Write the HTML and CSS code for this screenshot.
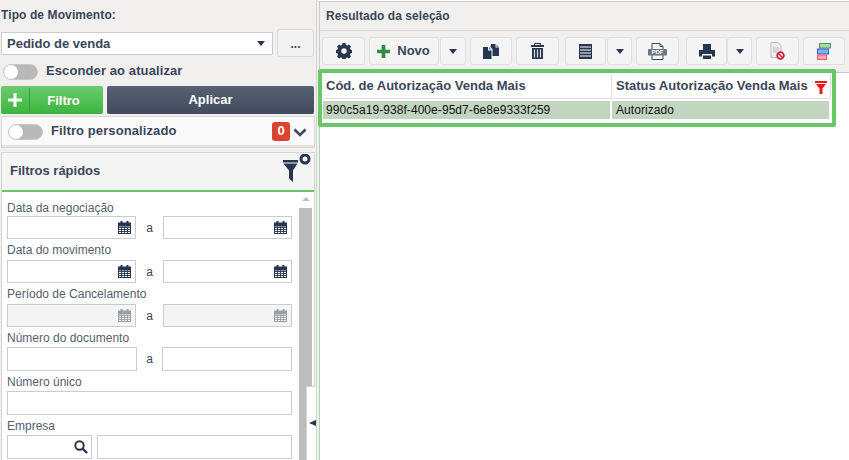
FILE: index.html
```html
<!DOCTYPE html>
<html lang="pt">
<head>
<meta charset="utf-8">
<title>Resultado da seleção</title>
<link rel="stylesheet" href="styles.css">
</head>
<body>
<div class="app">
  <aside class="left">
    <div class="tipo-title">Tipo de Movimento:</div>
    <div class="tipo-row">
      <div class="select"><span>Pedido de venda</span><i class="caret"></i></div>
      <div class="more">...</div>
    </div>
    <div class="toggle-row">
      <span class="toggle"><b></b></span><span class="toggle-label">Esconder ao atualizar</span>
    </div>
    <div class="action-row">
      <div class="btn-filter">
        <span class="plus"><svg width="14" height="14" viewBox="0 0 14 14"><path d="M5.500 0h3v5.500h5.500v3h-5.500v5.500h-3v-5.500h-5.500v-3h5.500z" fill="#fff"/></svg></span>
        <span class="filter-text">Filtro</span>
      </div>
      <div class="btn-apply">Aplicar</div>
    </div>
    <div class="custom">
      <span class="toggle"><b></b></span>
      <span class="custom-label">Filtro personalizado</span>
      <span class="badge">0</span>
      <svg class="chev" width="14" height="9" viewBox="0 0 14 9"><path d="M1.500 1.500L7 7l5.500-5.500" fill="none" stroke="#3c4a5c" stroke-width="2.600"/></svg>
    </div>
    <section class="quick">
      <header class="quick-head">
        <span class="quick-title">Filtros rápidos</span>
        <svg class="funnel" width="28" height="28" viewBox="0 0 28 28">
          <path d="M0 6h15v2.500h-15z" fill="#26364e"/>
          <path d="M0.500 9.500h14l-4.500 7v11.500l-4-3.500v-8z" fill="#26364e"/>
          <circle cx="22" cy="5" r="4" fill="none" stroke="#26364e" stroke-width="3"/>
        </svg>
      </header>
      <div class="quick-body">
        <div class="fields">
          <label class="lbl lbl-first">Data da negociação</label>
          <div class="range">
            <div class="inp date"><svg class="cal"><use href="#cal"/></svg></div><span class="a">a</span><div class="inp date"><svg class="cal"><use href="#cal"/></svg></div>
          </div>
          <label class="lbl">Data do movimento</label>
          <div class="range">
            <div class="inp date"><svg class="cal"><use href="#cal"/></svg></div><span class="a">a</span><div class="inp date"><svg class="cal"><use href="#cal"/></svg></div>
          </div>
          <label class="lbl">Período de Cancelamento</label>
          <div class="range">
            <div class="inp date off"><svg class="cal dim"><use href="#cal"/></svg></div><span class="a">a</span><div class="inp date off"><svg class="cal dim"><use href="#cal"/></svg></div>
          </div>
          <label class="lbl lbl-short">Número do documento</label>
          <div class="range tall">
            <div class="inp num"></div><span class="a a-num">a</span><div class="inp num"></div>
          </div>
          <label class="lbl lbl-short">Número único</label>
          <div class="inp wide"></div>
          <label class="lbl lbl-short">Empresa</label>
          <div class="emp">
            <div class="inp emp-code">
              <svg width="14" height="14" viewBox="0 0 14 14"><circle cx="5.500" cy="5.500" r="4.200" fill="none" stroke="#26364e" stroke-width="2"/><path d="M8.500 8.500l4.500 4.500" stroke="#26364e" stroke-width="2.400"/></svg>
            </div>
            <div class="inp emp-name"></div>
          </div>
        </div>
        <div class="scrollbar"><i class="up"></i><div class="thumb"></div></div>
      </div>
    </section>
    <div class="collapse"><i></i></div>
  </aside>
  <div class="gutter"></div>
  <main class="right">
    <div class="res-title">Resultado da seleção</div>
    <div class="toolbar">
      <div class="tb w43">
        <svg width="16" height="16" viewBox="0 0 16 16"><path fill="#26364e" fill-rule="evenodd" d="M6.500 0h3l.4 2 1.300.6 1.800-1.100 2 2-1.100 1.800.6 1.300 2 .4v3l-2 .4-.6 1.300 1.100 1.800-2 2-1.800-1.100-1.300.6-.4 2h-3l-.4-2-1.300-.6-1.800 1.100-2-2 1.100-1.800-.6-1.300-2-.4v-3l2-.4.6-1.300-1.100-1.800 2-2 1.800 1.100 1.300-.6zM8 5.300a2.700 2.700 0 1 0 0 5.400a2.700 2.700 0 0 0 0-5.400z"/></svg>
      </div>
      <div class="tb novo">
        <svg width="13" height="13" viewBox="0 0 14 14"><path d="M5 0h4v5h5v4h-5v5h-4v-5h-5v-4h5z" fill="#2f8f3f"/></svg>
        <span class="novo-text">Novo</span>
      </div>
      <div class="tb drop d1"><i class="caret"></i></div>
      <div class="tb w42 g4">
        <svg width="16" height="15" viewBox="0 0 16 15"><path d="M8 0h4.500v3.500h3.500v8.500h-6.500v-7l-2-2z" fill="#26364e"/><path d="M13.500 .5l2.500 2.500h-2.500z" fill="#3a8ad0"/><path d="M0 3h5v3.500h3.500v8.500h-8.500z" fill="#26364e"/><path d="M6 3l2.500 2.500h-2.500z" fill="#3a8ad0"/></svg>
      </div>
      <div class="tb w43 g4">
        <svg width="13" height="16" viewBox="0 0 13 16"><path d="M3.500 2v-1.500h6v1.500" fill="none" stroke="#26364e"/><path d="M0 2h13v2h-13zM1 5h11v11h-11z" fill="#26364e"/><path d="M3.500 6.500v8M6.500 6.500v8M9.500 6.500v8" stroke="#d8dce2" stroke-width="1.200"/></svg>
      </div>
      <div class="tb w41 g6">
        <svg width="13" height="15" viewBox="0 0 13 15"><path d="M0 0h13v15h-13z" fill="#26364e"/><path d="M1 3h11M1 6h11M1 9h11M1 12h11" stroke="#fff"/></svg>
      </div>
      <div class="tb drop"><i class="caret"></i></div>
      <div class="tb w43 g4">
        <svg width="19" height="17" viewBox="0 0 19 17"><path d="M4 .5h8l3 3v13h-11z" fill="#f4f4f4" stroke="#3b4659"/><path d="M12 .5v3h3" fill="none" stroke="#3b4659"/><rect x="0" y="6" width="19" height="6.500" rx="1" fill="#6c7480"/><text x="9.500" y="11.300" text-anchor="middle" class="pdf">PDF</text></svg>
      </div>
      <div class="tb w41 g7">
        <svg width="16" height="15" viewBox="0 0 16 15"><path d="M4 0h8v6h-8zM0 6h16v6.500h-3v-2.500h-10v2.500h-3zM4 11.500h8v3.500h-8z" fill="#26364e"/></svg>
      </div>
      <div class="tb drop d0"><i class="caret"></i></div>
      <div class="tb w43 g4">
        <svg width="15" height="18" viewBox="0 0 15 18"><path d="M1 .5h7l3 3v12h-10z" fill="#eee" stroke="#bbb"/><path d="M3 6h6M3 8h6M3 10h4" stroke="#bbb"/><circle cx="10.500" cy="13.500" r="3.300" fill="#fff" stroke="#d0203a" stroke-width="1.800"/><path d="M8.300 11.300l4.400 4.400" stroke="#d0203a" stroke-width="1.500"/></svg>
      </div>
      <div class="tb w42 g4">
        <svg width="14" height="17" viewBox="0 0 14 17"><rect x="2.500" y=".5" width="11" height="4.500" fill="#a8d8a8" stroke="#4a9a5a"/><rect x=".5" y="6" width="11" height="5" fill="#7fb0f0" stroke="#2f62d0"/><rect x=".5" y="12" width="9" height="4.500" fill="#f8a8a8" stroke="#ee5a6a"/></svg>
      </div>
    </div>
    <div class="content">
      <div class="g-row g-head">
        <div class="c1">Cód. de Autorização Venda Mais</div>
        <div class="c2">Status Autorização Venda Mais
          <svg class="redf" width="12" height="13" viewBox="0 0 12 13"><path d="M0 0h12v2h-12zM1 3h10l-3.500 4.500v5.500h-3v-5.500z" fill="#f01818"/></svg>
        </div>
      </div>
      <div class="g-row g-data">
        <div class="c1">990c5a19-938f-400e-95d7-6e8e9333f259</div>
        <div class="c2">Autorizado</div>
      </div>
    </div>
    <div class="hl"></div>
  </main>
</div>
<svg class="defs" width="0" height="0">
  <symbol id="cal" viewBox="0 0 13 13">
    <path d="M0 1.500h2.500v-1.500h2v1.500h4v-1.500h2v1.500h2.500v11.500h-13z" fill="currentColor"/>
    <path d="M1 5.500h11v6.500h-11z" fill="#fff"/>
    <path d="M1 6.500h11M1 8.500h11M1 10.500h11M3.500 5.500v7M6.500 5.500v7M9.500 5.500v7" stroke="currentColor" stroke-width=".9"/>
  </symbol>
</svg>
</body>
</html>
```
FILE: styles.css
```css
* { box-sizing: border-box; }
html, body { margin: 0; height: 100%; }
body {
  width: 849px; height: 460px; overflow: hidden;
  background: #fff;
  font-family: "Liberation Sans", Arial, sans-serif;
  font-size: 12px;
  color: #3b4659;
}
.app { display: flex; width: 849px; height: 460px; overflow: hidden; }
.defs { position: absolute; }

/* left */
.left {
  position: relative;
  width: 317px; flex: none; height: 460px;
  background: #f1f0ef;
  padding-left: 1px;
  border-right: 1px solid #d4d4d4;
  overflow: hidden;
}
.gutter { width: 2px; flex: none; background: #f1f0ef; }
.tipo-title { font-weight: bold; font-size: 12px; letter-spacing: .1px; height: 29px; line-height: 30px; }
.tipo-row { display: flex; align-items: center; width: 313px; justify-content: space-between; height: 28px; }
.select {
  width: 272px; height: 23px; background: #fff; border: 1px solid #ccc;
  display: flex; align-items: center; justify-content: space-between;
  padding: 0 7px 0 5px;
  font-weight: bold; font-size: 13px; color: #3b4659;
}
.caret { display: block; width: 0; height: 0; border-left: 4.500px solid transparent; border-right: 4.500px solid transparent; border-top: 5px solid #26364e; }
.more {
  width: 37px; height: 28px; border: 1px solid #d8d8d8; border-radius: 3px; background: #f3f3f3;
  text-align: center; font-weight: bold; line-height: 28px; font-size: 12px;
}
.toggle-row { display: flex; align-items: center; height: 29px; padding-left: 2px; }
.toggle { display: block; width: 35px; height: 16px; border-radius: 8px; background: #b9b9b9; flex: none; border: 1px solid #c9c9c9; }
.toggle b { display: block; width: 14px; height: 14px; border-radius: 50%; background: #fff; }
.toggle-label { margin: 0 0 2px 8px; font-weight: bold; font-size: 13px; letter-spacing: .1px; }
.action-row { display: flex; height: 28px; width: 313px; justify-content: space-between; }
.btn-filter {
  width: 102px; height: 28px; border-radius: 2px; display: flex; align-items: center;
  background: linear-gradient(#6bcb6b, #3bb53e); color: #fff; font-weight: bold; font-size: 13px;
}
.plus { width: 29px; height: 24px; display: flex; align-items: center; justify-content: center; border-right: 1px solid #37a03a; }
.filter-text { flex: 1; text-align: center; padding-right: 6px; }
.btn-apply {
  width: 207px; height: 28px; border-radius: 2px; background: linear-gradient(#566174, #414b5c);
  color: #fff; font-weight: bold; font-size: 13px; text-align: center; line-height: 28px;
}
.custom {
  display: flex; align-items: center; width: 314px; height: 32px; margin-top: 2px;
  background: #fafafa; border: 1px solid #d8d8d8; padding: 0 7px 0 6px;
  box-shadow: inset 0 -2px 0 #e4e4e4;
}
.custom-label { margin: 0 0 4px 8px; font-weight: bold; font-size: 13px; letter-spacing: .1px; flex: 1; }
.badge { width: 18px; height: 19px; margin-bottom: 1px; border-radius: 3px; background: #d9432f; color: #fff; font-weight: bold; font-size: 13px; text-align: center; line-height: 17px; }
.chev { margin-left: 3px; }
.quick { width: 314px; height: 308px; margin-top: 4px; border: 1px solid #d5d5d5; border-bottom: 0; background: #fff; }
.quick-head {
  height: 39px; background: #f5f5f5; border-bottom: 2px solid #67c567;
  display: flex; align-items: center; justify-content: space-between;
  padding: 0 3px 0 8px; font-weight: bold; font-size: 13px; color: #3b4659;
}
.quick-title { margin-bottom: 2px; }
.funnel { margin-bottom: 8px; }
.quick-body { display: flex; height: 267px; }
.fields { width: 296px; padding: 6px 0 0 5px; flex: none; }
.lbl { display: block; height: 19px; line-height: 19px; color: #55606f; font-size: 12px; margin-top: 2px; }
.lbl-first { margin-top: 0; height: 18px; line-height: 20px; }
.lbl-short { height: 18px; line-height: 18px; }
.range { display: flex; align-items: center; width: 285px; height: 23px; }
.range.tall { height: 24px; }
.inp { background: #fff; border: 1px solid #ccc; height: 100%; }
.date { width: 129px; display: flex; align-items: center; justify-content: flex-end; padding-right: 4px; }
.off { background: #f4f4f4; }
.cal { width: 13px; height: 13px; color: #26364e; }
.cal.dim { color: #9a9fa6; }
.a { width: 27px; text-align: center; color: #3b4659; font-size: 12px; }
.a-num { width: 25px; }
.num { width: 130px; }
.wide { width: 285px; height: 24px; }
.emp { display: flex; width: 285px; height: 24px; }
.emp-code { width: 85px; display: flex; align-items: center; justify-content: flex-end; padding-right: 3px; }
.emp-name { width: 195px; margin-left: 5px; }
.scrollbar { width: 15px; margin-left: 1px; flex: none; background: #fff; }
.up { display: block; width: 0; height: 0; margin: 5px 0 0 3px; border-left: 4px solid transparent; border-right: 4px solid transparent; border-bottom: 4px solid #bdbdbd; }
.thumb { margin-top: 7px; height: 260px; background: #bdbdbd; width: 13px; }
.collapse {
  position: absolute; left: 306px; top: 386px; width: 11px; height: 74px;
  background: #fff; border: 1px solid #d5d5d5; border-bottom: 0;
  display: flex; align-items: flex-start; justify-content: flex-end;
}
.collapse i { margin-top: 33px; width: 0; height: 0; border-top: 3.500px solid transparent; border-bottom: 3.500px solid transparent; border-right: 7px solid #26364e; }

/* right */
.right { position: relative; flex: 1; min-width: 0; display: flex; flex-direction: column; background: #fff; }
.res-title {
  height: 30px; margin-top: 1px; flex: none; background: #f1f0ef; border-top: 1px solid #ccc; border-left: 1px solid #ccc; border-bottom: 1px solid #d8d8d8;
  padding-left: 6px; line-height: 28px; font-weight: bold; font-size: 12px; letter-spacing: .05px;
}
.toolbar {
  height: 42px; flex: none; background: #f1f0ef; border-left: 1px solid #ccc; border-bottom: 1px solid #c8c8c8;
  display: flex; align-items: flex-start; padding: 6px 0 0 2px;
}
.tb {
  height: 28px; background: #f4f4f4; border: 1px solid #e0e0e0; border-radius: 3px; flex: none;
  display: flex; align-items: center; justify-content: center;
}
.w43 { width: 43px; }
.w42 { width: 42px; }
.w41 { width: 41px; }
.g4 { margin-left: 4px; }
.g6 { margin-left: 6px; }
.g7 { margin-left: 7px; }
.novo { width: 70px; margin-left: 4px; font-weight: bold; font-size: 13px; color: #3b4659; gap: 7px; padding-right: 1px; }
.novo-text { margin-bottom: 2px; }
.drop { width: 25px; margin-left: 1px; }
.d1 { width: 26px; }
.d0 { margin-left: 0; }
.pdf { font: bold 6px "Liberation Sans", Arial, sans-serif; fill: #fff; }
.content { flex: 1; padding: 1px 0 0 3px; border-left: 1px solid #a8d8a8; }
.g-row { display: flex; }
.g-head { height: 25px; font-weight: bold; font-size: 13px; color: #3b4659; line-height: 24px; border-bottom: 1px solid #ddd; width: 508px; }
.g-head .c1 { width: 288px; padding-left: 3px; }
.g-head .c2 { width: 220px; padding: 0 3px 0 4px; border-left: 1px solid #ddd; border-right: 1px solid #ddd; display: flex; align-items: center; justify-content: space-between; }
.g-data { height: 18px; margin-top: 2px; line-height: 19px; font-size: 12px; letter-spacing: .06px; color: #111; }
.g-data .c1 { width: 287px; padding-left: 3px; background: #c2d6bf; }
.g-data .c2 { width: 217px; margin-left: 2px; padding-left: 4px; background: #c2d6bf; }
.redf { flex: none; margin-top: 2px; }
.hl { position: absolute; left: -1px; top: 69px; width: 518px; height: 58px; border: 4px solid #68c868; border-radius: 2px; pointer-events: none; }
```
